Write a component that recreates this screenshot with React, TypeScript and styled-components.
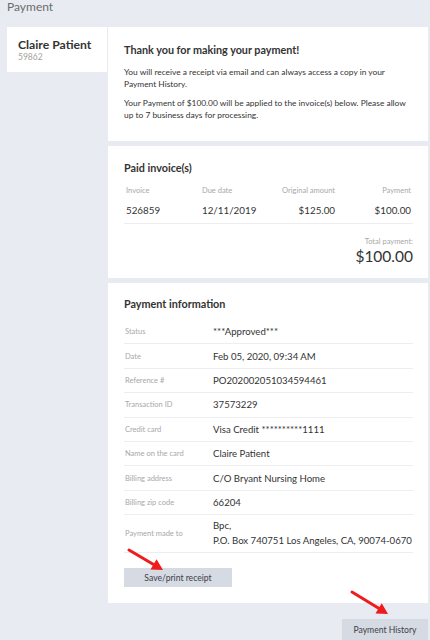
import React from 'react';
import styled, { createGlobalStyle } from 'styled-components';

const GlobalStyle = createGlobalStyle`
  html, body {
    margin: 0;
    padding: 0;
    background-color: #e8ebf2;
    font-family: Lato, "Open Sans", Arial, sans-serif;
    color: #333;
  }
`;

const Page = styled.div`
  position: relative;
  width: 430px;
  height: 640px;
  overflow: hidden;
  background-color: #e8ebf2;
`;

const PageTitle = styled.div`
  height: 27px;
  padding-left: 7px;
  font-size: 12px;
  line-height: 14px;
  color: #6b6b6b;
`;

const Layout = styled.div`
  display: flex;
  align-items: flex-start;
  gap: 1px;
  padding: 0 2px 0 7px;
`;

const Sidebar = styled.div`
  flex-shrink: 0;
  width: 100px;
  height: 45px;
  padding: 10px 0 0 11px;
  box-sizing: border-box;
  background: #fff;
`;

const PatientName = styled.div`
  font-size: 12.2px;
  font-weight: 700;
  line-height: 15px;
  color: #333;
  white-space: nowrap;
`;

const PatientId = styled.div`
  font-size: 8.5px;
  line-height: 11px;
  color: #a3a3a3;
`;

const Main = styled.div`
  flex: 1;
  min-width: 0;
  display: flex;
  flex-direction: column;
  gap: 5px;
`;

const Card = styled.div<{ $pt?: number; $pb?: number }>`
  background: #fff;
  padding: ${(p) => p.$pt ?? 16}px 15px ${(p) => p.$pb ?? 16}px 16px;
`;

const CardTitle = styled.div`
  font-size: 10.8px;
  font-weight: 700;
  line-height: 14px;
  color: #333;
`;

const Para = styled.p`
  margin: 0;
  font-size: 8.4px;
  line-height: 12px;
  color: #333;
  & + & {
    margin-top: 7px;
  }
`;

const Spacer = styled.div<{ $h: number }>`
  height: ${(p) => p.$h}px;
`;

const InvoiceGrid = styled.div`
  display: grid;
  grid-template-columns: 76px 1fr 1fr 76px;
  margin-top: 10px;
`;

const HeadCell = styled.div<{ $right?: boolean }>`
  font-size: 7.5px;
  line-height: 12px;
  color: #a8a8a8;
  padding: 0 2px;
  text-align: ${(p) => (p.$right ? 'right' : 'left')};
`;

const ValueCell = styled.div<{ $right?: boolean }>`
  font-size: 9.8px;
  line-height: 14px;
  color: #333;
  padding: 6px 2px 6px;
  border-bottom: 1px solid #eceef2;
  text-align: ${(p) => (p.$right ? 'right' : 'left')};
`;

const Total = styled.div`
  display: flex;
  flex-direction: column;
  align-items: flex-end;
  margin-top: 13px;
`;

const TotalLabel = styled.div`
  font-size: 7.5px;
  line-height: 10px;
  color: #a8a8a8;
`;

const TotalValue = styled.div`
  font-size: 15.5px;
  line-height: 18px;
  color: #333;
`;

const InfoList = styled.div`
  margin-top: 9px;
`;

const InfoRow = styled.div`
  display: grid;
  grid-template-columns: 88px 1fr;
  align-items: center;
  min-height: 23.4px;
  padding: 0 0 0 1px;
  border-bottom: 1px solid #eceef2;
`;

const InfoLabel = styled.div`
  font-size: 7.5px;
  color: #a8a8a8;
`;

const InfoValue = styled.div<{ $multi?: boolean }>`
  font-size: 9.6px;
  line-height: 15px;
  color: #333;
  white-space: nowrap;
  padding: ${(p) => (p.$multi ? '3px 0 4px' : '0')};
`;

const GrayButton = styled.button`
  display: block;
  border: none;
  background: #d6dae2;
  color: #3a3f4a;
  font-family: inherit;
  font-size: 8.6px;
  height: 20px;
  padding: 0;
  cursor: pointer;
`;

const ReceiptButton = styled(GrayButton)`
  width: 108px;
  height: 19px;
  margin-top: 15px;
`;

const Footer = styled.div`
  display: flex;
  justify-content: flex-end;
  padding: 16px 2px 0 0;
`;

const HistoryButton = styled(GrayButton)`
  width: 86px;
  height: 21px;
`;

const Arrows = styled.svg`
  position: absolute;
  left: 0;
  top: 0;
  pointer-events: none;
`;

const invoices = [
  { invoice: '526859', due: '12/11/2019', original: '$125.00', payment: '$100.00' },
];

const info: { label: string; value: React.ReactNode; multi?: boolean }[] = [
  { label: 'Status', value: '***Approved***' },
  { label: 'Date', value: 'Feb 05, 2020, 09:34 AM' },
  { label: 'Reference #', value: 'PO202002051034594461' },
  { label: 'Transaction ID', value: '37573229' },
  { label: 'Credit card', value: 'Visa Credit **********1111' },
  { label: 'Name on the card', value: 'Claire Patient' },
  { label: 'Billing address', value: 'C/O Bryant Nursing Home' },
  { label: 'Billing zip code', value: '66204' },
  {
    label: 'Payment made to',
    value: (
      <>
        Bpc,
        <br />
        P.O. Box 740751 Los Angeles, CA, 90074-0670
      </>
    ),
    multi: true,
  },
];

const Arrow: React.FC<{ x1: number; y1: number; x2: number; y2: number }> = ({ x1, y1, x2, y2 }) => {
  const a = Math.atan2(y2 - y1, x2 - x1);
  const len = 11;
  const w = 6;
  const bx = x2 - len * Math.cos(a);
  const by = y2 - len * Math.sin(a);
  const px = -Math.sin(a) * w;
  const py = Math.cos(a) * w;
  return (
    <g>
      <line x1={x1} y1={y1} x2={bx + 1.5 * Math.cos(a)} y2={by + 1.5 * Math.sin(a)} stroke="#ee1c1c" strokeWidth={3} strokeLinecap="round" />
      <polygon points={`${x2},${y2} ${bx + px},${by + py} ${bx - px},${by - py}`} fill="#ee1c1c" />
    </g>
  );
};

const App: React.FC = () => {
  return (
    <Page>
      <GlobalStyle />
      <PageTitle>Payment</PageTitle>
      <Layout>
        <Sidebar>
          <PatientName>Claire Patient</PatientName>
          <PatientId>59862</PatientId>
        </Sidebar>
        <Main>
          <Card $pt={16} $pb={20}>
            <CardTitle>Thank you for making your payment!</CardTitle>
            <Spacer $h={9} />
            <Para>
              You will receive a receipt via email and can always access a copy in your Payment History.
            </Para>
            <Para>
              Your Payment of $100.00 will be applied to the invoice(s) below. Please allow up to 7 business days for
              processing.
            </Para>
          </Card>

          <Card $pt={15} $pb={13}>
            <CardTitle>Paid invoice(s)</CardTitle>
            <InvoiceGrid>
              <HeadCell>Invoice</HeadCell>
              <HeadCell>Due date</HeadCell>
              <HeadCell $right>Original amount</HeadCell>
              <HeadCell $right>Payment</HeadCell>
              {invoices.map((row) => (
                <React.Fragment key={row.invoice}>
                  <ValueCell>{row.invoice}</ValueCell>
                  <ValueCell>{row.due}</ValueCell>
                  <ValueCell $right>{row.original}</ValueCell>
                  <ValueCell $right>{row.payment}</ValueCell>
                </React.Fragment>
              ))}
            </InvoiceGrid>
            <Total>
              <TotalLabel>Total payment:</TotalLabel>
              <TotalValue>$100.00</TotalValue>
            </Total>
          </Card>

          <Card $pt={14} $pb={16}>
            <CardTitle>Payment information</CardTitle>
            <InfoList>
              {info.map((row) => (
                <InfoRow key={row.label}>
                  <InfoLabel>{row.label}</InfoLabel>
                  <InfoValue $multi={row.multi}>{row.value}</InfoValue>
                </InfoRow>
              ))}
            </InfoList>
            <ReceiptButton>Save/print receipt</ReceiptButton>
          </Card>
        </Main>
      </Layout>
      <Footer>
        <HistoryButton>Payment History</HistoryButton>
      </Footer>
      <Arrows width={430} height={640}>
        <Arrow x1={129} y1={550} x2={163} y2={570} />
        <Arrow x1={352} y1={592} x2={388} y2={614} />
      </Arrows>
    </Page>
  );
};

export default App;
